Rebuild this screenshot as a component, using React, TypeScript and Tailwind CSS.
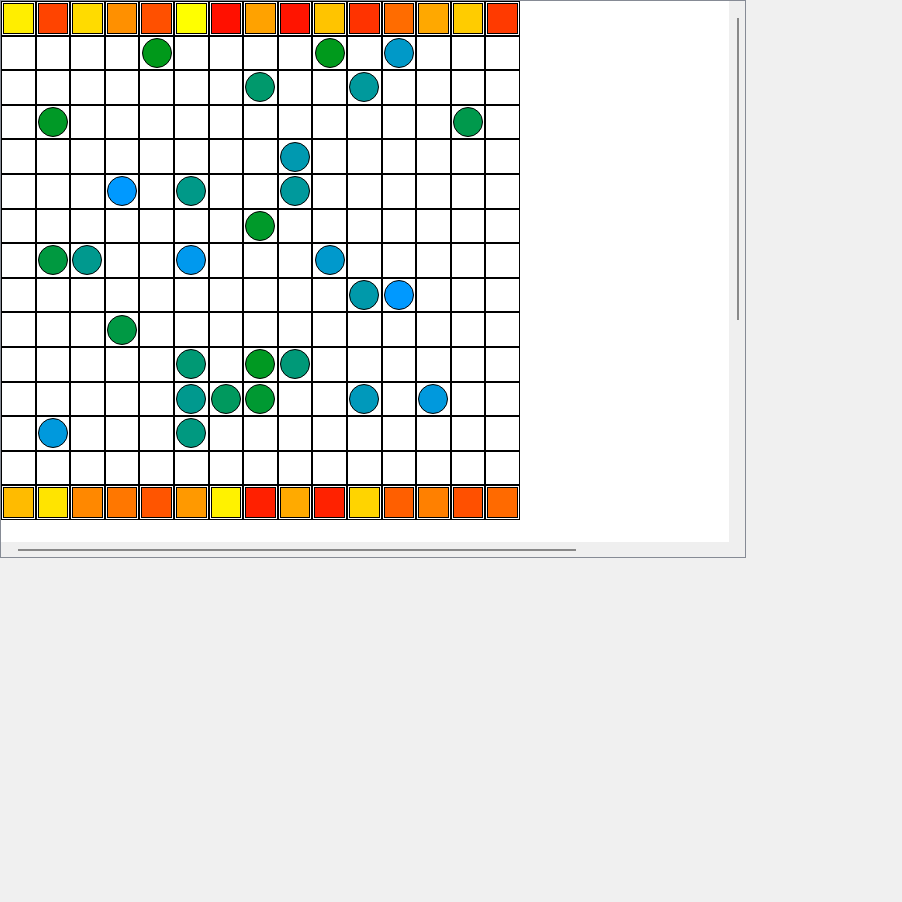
const topRow = [
  "#ffee00", "#ff4400", "#ffdb00", "#ff9000", "#ff5000",
  "#ffff00", "#ff1000", "#ffa200", "#ff1400", "#ffc400",
  "#ff3300", "#ff6c00", "#ffa800", "#ffcc00", "#ff3a00",
];

const bottomRow = [
  "#ffbb00", "#ffe400", "#ff8800", "#ff7700", "#ff5500",
  "#ff9900", "#fff200", "#ff2000", "#ffaa00", "#ff2200",
  "#ffd400", "#ff5f00", "#ff8000", "#ff5000", "#ff6a00",
];

// [row, col, colour] - rows 1..13 are the white board rows
const pieces: [number, number, string][] = [
  [1, 4, "#00991a"],
  [1, 9, "#009a1c"],
  [1, 11, "#0099c8"],
  [2, 7, "#00996c"],
  [2, 10, "#00999c"],
  [3, 1, "#009926"],
  [3, 13, "#00994c"],
  [4, 8, "#0099b0"],
  [5, 3, "#0099ff"],
  [5, 5, "#009988"],
  [5, 8, "#00999c"],
  [6, 7, "#009a2a"],
  [7, 1, "#009940"],
  [7, 2, "#00998e"],
  [7, 5, "#0099ee"],
  [7, 9, "#0099cc"],
  [8, 10, "#0099aa"],
  [8, 11, "#0099ff"],
  [9, 3, "#009944"],
  [10, 5, "#009974"],
  [10, 7, "#009922"],
  [10, 8, "#009978"],
  [11, 5, "#00998e"],
  [11, 6, "#00995e"],
  [11, 7, "#009932"],
  [11, 10, "#0099bb"],
  [11, 12, "#0099dd"],
  [12, 1, "#0099dd"],
  [12, 5, "#009980"],
];

function Tile({ color }: { color: string }) {
  return (
    <div className="bg-white p-px">
      <div className="w-full h-full border border-black" style={{ backgroundColor: color }} />
    </div>
  );
}

function Board() {
  const cells = [];
  for (let r = 0; r < 15; r++) {
    for (let c = 0; c < 15; c++) {
      if (r === 0) {
        cells.push(<Tile key={`${r}-${c}`} color={topRow[c]} />);
        continue;
      }
      if (r === 14) {
        cells.push(<Tile key={`${r}-${c}`} color={bottomRow[c]} />);
        continue;
      }
      const piece = pieces.find((p) => p[0] === r && p[1] === c);
      cells.push(
        <div key={`${r}-${c}`} className="bg-white flex items-center justify-center">
          {piece && (
            <div
              className="w-[30px] h-[30px] rounded-full border border-black shrink-0"
              style={{ backgroundColor: piece[2] }}
            />
          )}
        </div>
      );
    }
  }

  return (
    <div className="w-[519px] h-[519px] bg-black p-px grid grid-cols-[repeat(15,1fr)] grid-rows-[repeat(15,1fr)] gap-[2px]">
      {cells}
    </div>
  );
}

export default function App() {
  return (
    <div className="w-[902px] h-[902px] bg-[#f0f0f0]">
      <div className="w-[746px] h-[558px] border border-[#868b95] flex flex-col">
        <div className="flex flex-1 min-h-0">
          <div className="flex-1 bg-white">
            <Board />
          </div>
          <div className="w-4 bg-[#efefef] pt-[17px] flex justify-center">
            <div className="w-[2px] h-[302px] bg-[#888888] ml-[1px]" />
          </div>
        </div>
        <div className="h-[15px] flex">
          <div className="flex-1 bg-[#efefef] pl-[17px] pt-[7px]">
            <div className="w-[558px] h-[2px] bg-[#888888]" />
          </div>
          <div className="w-4 bg-[#efefef]" />
        </div>
      </div>
    </div>
  );
}
